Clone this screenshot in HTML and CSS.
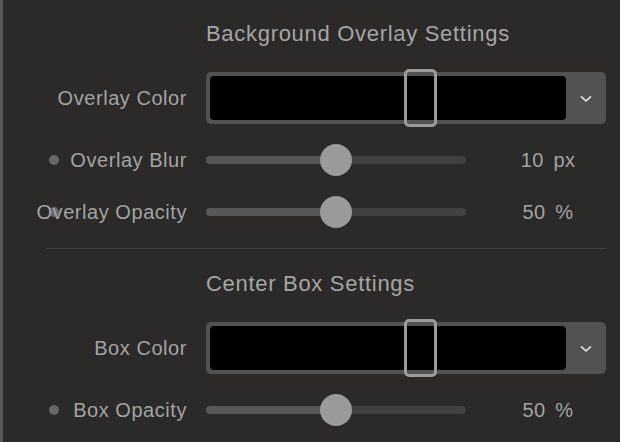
FILE: index.html
```html
<!DOCTYPE html>
<html lang="en">
<head>
  <meta charset="UTF-8" />
  <meta name="viewport" content="width=device-width, initial-scale=1.0" />
  <title>Overlay Settings</title>
  <link rel="stylesheet" href="styles.css">
</head>
<body>
  <div class="panel">
    <section class="group">
      <div class="row head-row">
        <h2 class="heading">Background Overlay Settings</h2>
      </div>

      <div class="row picker-row">
        <label class="label"><span class="text">Overlay Color</span></label>
        <div class="picker">
          <div class="swatch"><span class="marker"></span></div>
          <div class="drop">
            <svg width="12" height="8" viewBox="0 0 12 8"><path d="M1.5 1.8 L6 6 L10.5 1.8" fill="none" stroke="#e4e4e4" stroke-width="1.7" stroke-linecap="round" stroke-linejoin="round"/></svg>
          </div>
        </div>
      </div>

      <div class="row slider-row">
        <label class="label"><span class="dot"></span><span class="text">Overlay Blur</span></label>
        <div class="slider">
          <div class="track"><div class="fill" style="width:50%"></div></div>
          <span class="knob" style="left:50%"></span>
        </div>
        <div class="value">10 px</div>
      </div>

      <div class="row slider-row">
        <label class="label"><span class="dot"></span><span class="text">Overlay Opacity</span></label>
        <div class="slider">
          <div class="track"><div class="fill" style="width:50%"></div></div>
          <span class="knob" style="left:50%"></span>
        </div>
        <div class="value">50 %</div>
      </div>
    </section>

    <hr class="divider">

    <section class="group second">
      <div class="row head-row">
        <h2 class="heading">Center Box Settings</h2>
      </div>

      <div class="row picker-row">
        <label class="label"><span class="text">Box Color</span></label>
        <div class="picker">
          <div class="swatch"><span class="marker"></span></div>
          <div class="drop">
            <svg width="12" height="8" viewBox="0 0 12 8"><path d="M1.5 1.8 L6 6 L10.5 1.8" fill="none" stroke="#e4e4e4" stroke-width="1.7" stroke-linecap="round" stroke-linejoin="round"/></svg>
          </div>
        </div>
      </div>

      <div class="row slider-row">
        <label class="label"><span class="dot"></span><span class="text">Box Opacity</span></label>
        <div class="slider">
          <div class="track"><div class="fill" style="width:50%"></div></div>
          <span class="knob" style="left:50%"></span>
        </div>
        <div class="value">50 %</div>
      </div>
    </section>
  </div>
</body>
</html>
```

FILE: styles.css
```css
html, body {
  margin: 0;
  padding: 0;
  background-color: #2b2a28;
}
body {
  font-family: "Liberation Sans", Arial, sans-serif;
  color: #a3a3a3;
}
.panel {
  width: 617px;
  height: 442px;
  border-left: 3px solid #595959;
  background-color: #2b2a28;
  padding-top: 19px;
  box-sizing: border-box;
  overflow: hidden;
}
.row {
  display: grid;
  grid-template-columns: 184px 260px 121px;
  column-gap: 19px;
  align-items: center;
}
.head-row {
  height: 30px;
}
.heading {
  grid-column: 2 / 4;
  margin: 0;
  font-size: 22px;
  line-height: 30px;
  font-weight: normal;
  letter-spacing: 0.7px;
  color: #a5a5a5;
}
.picker-row {
  margin-top: 23px;
  height: 52px;
}
.slider-row {
  height: 52px;
}
.picker-row + .slider-row {
  margin-top: 10px;
}
.label {
  display: grid;
  align-items: center;
  font-size: 20px;
  letter-spacing: 0.55px;
}
.label .dot,
.label .text {
  grid-area: 1 / 1;
}
.dot {
  justify-self: start;
  margin-left: 46px;
  width: 10px;
  height: 10px;
  border-radius: 50%;
  background-color: #676767;
}
.text {
  justify-self: end;
}
.picker {
  grid-column: 2 / 4;
  display: flex;
  height: 52px;
  box-sizing: border-box;
  padding: 4px 0 4px 4px;
  background-color: #525252;
  border-radius: 5px;
}
.swatch {
  flex: 1;
  position: relative;
  background-color: #000;
  border-radius: 4px;
}
.marker {
  position: absolute;
  left: 194px;
  top: -7px;
  width: 33px;
  height: 58px;
  box-sizing: border-box;
  border: 3px solid #9b9b9b;
  border-radius: 5px;
}
.drop {
  width: 40px;
  display: flex;
  align-items: center;
  justify-content: center;
  padding-top: 1px;
}
.slider {
  position: relative;
  height: 32px;
  display: flex;
  align-items: center;
}
.track {
  width: 100%;
  height: 8px;
  border-radius: 4px;
  background-color: #42413f;
  overflow: hidden;
}
.fill {
  height: 100%;
  background-color: #575757;
}
.knob {
  position: absolute;
  top: 0;
  width: 32px;
  height: 32px;
  margin-left: -16px;
  border-radius: 50%;
  background-color: #9a9a98;
}
.value {
  font-size: 20px;
  letter-spacing: 0.3px;
  word-spacing: 4px;
  text-align: center;
  padding-left: 5px;
}
.divider {
  margin: 10px 0 0 43px;
  width: 560px;
  height: 0;
  border: none;
  border-top: 1px solid #42413f;
}
.group.second .head-row {
  margin-top: 20px;
}
```
